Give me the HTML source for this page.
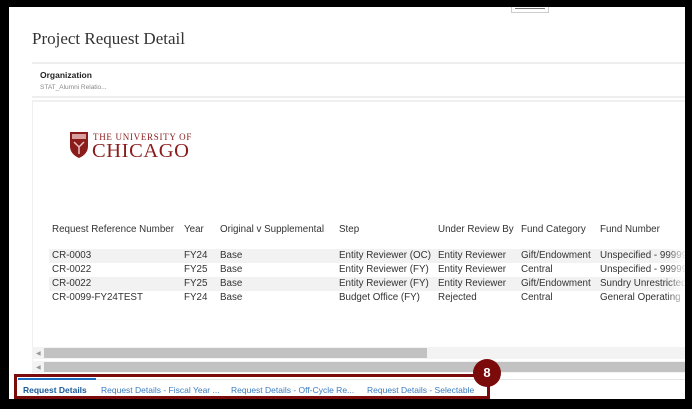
<!DOCTYPE html>
<html><head><style>
*{margin:0;padding:0;box-sizing:border-box}
body{width:692px;height:409px;background:#000;position:relative;overflow:hidden;font-family:"Liberation Sans",sans-serif}
.page{position:absolute;left:9px;top:7px;width:676px;height:392px;background:#fff;overflow:hidden}
.abs{position:absolute;white-space:nowrap}
.t{font-size:9.8px;color:#333}
.row{position:absolute;left:40px;width:640px;height:14px}
</style></head><body>
<div class="page">
<div class="abs" style="left:502px;top:-2px;width:38px;height:8px;border:1px solid #ccc;border-top:none;background:#fff"><div style="margin:3px 3px 0;height:1px;background:#777"></div></div>
<div class="abs" style="left:23px;top:22px;font-family:'Liberation Serif',serif;font-size:17px;color:#333">Project Request Detail</div>
<div class="abs" style="left:23px;top:55px;width:660px;height:2px;background:#eee"></div>
<div class="abs" style="left:31px;top:63px;font-size:8.5px;font-weight:bold;color:#222">Organization</div>
<div class="abs" style="left:31px;top:77px;font-size:6.5px;color:#888">STAT_Alumni Relatio...</div>
<div class="abs" style="left:23px;top:89px;width:660px;height:2px;background:#eee"></div>
<div class="abs" style="left:23px;top:93px;width:660px;height:2px;background:#f0f0f0"></div>
<div class="abs" style="left:23px;top:95px;width:1px;height:270px;background:#eee"></div>
<svg class="abs" style="left:61px;top:125px" width="18" height="26" viewBox="0 0 18 26"><path d="M0 0H18V14Q18 22 9 26Q0 22 0 14Z" fill="#8a1c1c"/><rect x="2" y="2" width="14" height="5" fill="#d9a0a0"/><path d="M4 10L9 15L14 10M9 15V22" stroke="#e8c0c0" stroke-width="1.5" fill="none"/></svg>
<div class="abs" style="left:84px;top:125px;font-family:'Liberation Serif',serif;font-size:9px;color:#8a1c1c;letter-spacing:.7px">THE UNIVERSITY OF</div>
<div class="abs" style="left:83px;top:133px;font-family:'Liberation Serif',serif;font-size:20.5px;color:#8a1c1c;letter-spacing:.6px">CHICAGO</div>
<div class="abs t" style="left:43px;top:217px">Request Reference Number</div>
<div class="abs t" style="left:175px;top:217px">Year</div>
<div class="abs t" style="left:211px;top:217px">Original v Supplemental</div>
<div class="abs t" style="left:330px;top:217px">Step</div>
<div class="abs t" style="left:429px;top:217px">Under Review By</div>
<div class="abs t" style="left:512px;top:217px">Fund Category</div>
<div class="abs t" style="left:591px;top:217px">Fund Number</div>
<div class="row" style="top:242px;background:#f2f2f2"></div>
<div class="row" style="top:270px;background:#f2f2f2"></div>
<div style="position:absolute;left:0;top:243px">
<div class="abs t" style="left:43px;top:0">CR-0003</div><div class="abs t" style="left:175px;top:0">FY24</div><div class="abs t" style="left:211px;top:0">Base</div><div class="abs t" style="left:330px;top:0">Entity Reviewer (OC)</div><div class="abs t" style="left:429px;top:0">Entity Reviewer</div><div class="abs t" style="left:512px;top:0">Gift/Endowment</div><div class="abs t" style="left:591px;top:0">Unspecified - 99999</div>
<div class="abs t" style="left:43px;top:14px">CR-0022</div><div class="abs t" style="left:175px;top:14px">FY25</div><div class="abs t" style="left:211px;top:14px">Base</div><div class="abs t" style="left:330px;top:14px">Entity Reviewer (FY)</div><div class="abs t" style="left:429px;top:14px">Entity Reviewer</div><div class="abs t" style="left:512px;top:14px">Central</div><div class="abs t" style="left:591px;top:14px">Unspecified - 99999</div>
<div class="abs t" style="left:43px;top:28px">CR-0022</div><div class="abs t" style="left:175px;top:28px">FY25</div><div class="abs t" style="left:211px;top:28px">Base</div><div class="abs t" style="left:330px;top:28px">Entity Reviewer (FY)</div><div class="abs t" style="left:429px;top:28px">Entity Reviewer</div><div class="abs t" style="left:512px;top:28px">Gift/Endowment</div><div class="abs t" style="left:591px;top:28px">Sundry Unrestricted</div>
<div class="abs t" style="left:43px;top:42px">CR-0099-FY24TEST</div><div class="abs t" style="left:175px;top:42px">FY24</div><div class="abs t" style="left:211px;top:42px">Base</div><div class="abs t" style="left:330px;top:42px">Budget Office (FY)</div><div class="abs t" style="left:429px;top:42px">Rejected</div><div class="abs t" style="left:512px;top:42px">Central</div><div class="abs t" style="left:591px;top:42px">General Operating</div>
</div>
<div class="abs" style="left:658px;top:95px;width:20px;height:240px;background:linear-gradient(90deg,rgba(255,255,255,0),#fff)"></div>
<div class="abs" style="left:23px;top:340px;width:660px;height:12px;background:#f3f3f3"></div>
<div class="abs" style="left:27px;top:343px;font-size:6px;color:#999">◀</div>
<div class="abs" style="left:35px;top:341px;width:383px;height:10px;background:#c2c2c2"></div>
<div class="abs" style="left:23px;top:354px;width:660px;height:12px;background:#f3f3f3"></div>
<div class="abs" style="left:27px;top:357px;font-size:6px;color:#999">◀</div>
<div class="abs" style="left:35px;top:355px;width:650px;height:10px;background:#c2c2c2"></div>
<div class="abs" style="left:9px;top:372px;width:670px;height:1px;background:#e5e5e5"></div>
<div class="abs" style="left:9px;top:371px;width:78px;height:2px;background:#1b6ec2"></div>
<div class="abs" style="left:14px;top:378px;font-size:8.5px;font-weight:bold;color:#1a5a9a">Request Details</div>
<div class="abs" style="left:92px;top:378px;font-size:8.5px;color:#3a7cc0">Request Details - Fiscal Year ...</div>
<div class="abs" style="left:222px;top:378px;font-size:8.5px;color:#3a7cc0">Request Details - Off-Cycle Re...</div>
<div class="abs" style="left:358px;top:378px;font-size:8.5px;color:#3a7cc0">Request Details - Selectable</div>
<div class="abs" style="left:5px;top:367px;width:476px;height:25px;border:3px solid #7b0a0a"></div>
<div class="abs" style="left:464px;top:352px;width:28px;height:28px;border-radius:50%;background:#7b0a0a;color:#fff;font-size:13px;font-weight:bold;text-align:center;line-height:28px">8</div>
</div>
</body></html>
